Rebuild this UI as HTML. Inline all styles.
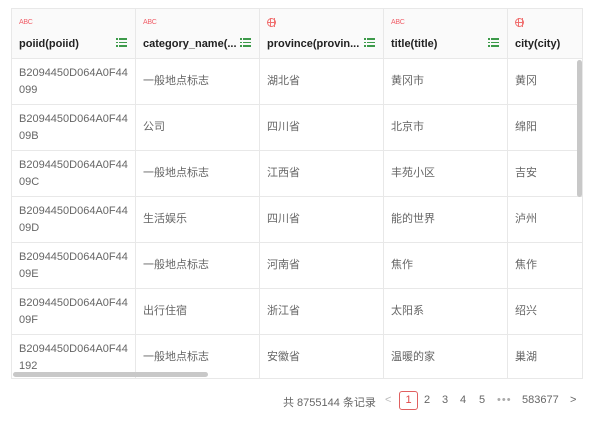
<!DOCTYPE html>
<html><head><meta charset="utf-8"><style>
*{margin:0;padding:0;box-sizing:border-box}
body{width:600px;height:424px;background:#fff;font-family:"Liberation Sans","Noto Sans CJK SC",sans-serif;position:relative;overflow:hidden}
.tbl{position:absolute;left:11px;top:8px;width:572px;height:371px;border:1px solid #e8e8e8;overflow:hidden}
.hd{position:absolute;top:0;height:50px;background:#fafafa;border-right:1px solid #e8e8e8;border-bottom:1px solid #e8e8e8}
.abc{position:absolute;left:7px;top:10px;font-size:7px;color:#f0606a;letter-spacing:-0.3px}
.glb{position:absolute;left:7px;top:9px;width:9px;height:9px;border:1px solid #f07070;border-radius:50%}
.glb:before{content:"";position:absolute;left:2px;top:-1px;width:3px;height:9px;border-left:1px solid #f07070;border-right:1px solid #f07070}
.glb:after{content:"";position:absolute;left:-1px;top:3px;width:9px;height:1px;background:#f07070}
.tt{position:absolute;left:7px;top:29px;font-size:11px;font-weight:bold;color:#222;white-space:nowrap}
.ic{position:absolute;right:8px;top:29px;width:11px;height:9px}
.ic i{display:block;height:1.5px;margin-bottom:2px;background:#3d9a4a;margin-left:3px;position:relative}
.ic i:before{content:"";position:absolute;left:-3px;width:1.5px;height:1.5px;background:#3d9a4a}
.c{position:absolute;height:46px;border-right:1px solid #e8e8e8;border-bottom:1px solid #e8e8e8;font-size:11px;color:#666;padding-left:7px;display:flex;align-items:center;line-height:17px}
.pg{position:absolute;top:394px;font-size:11px;color:#666}
</style></head><body>
<div class="tbl">
<div class="hd" style="left:0;width:124px"><span class="abc">ABC</span><span class="tt">poiid(poiid)</span><span class="ic"><i></i><i></i><i></i></span></div>
<div class="hd" style="left:124px;width:124px"><span class="abc">ABC</span><span class="tt">category_name(...</span><span class="ic"><i></i><i></i><i></i></span></div>
<div class="hd" style="left:248px;width:124px"><span class="glb"></span><span class="tt">province(provin...</span><span class="ic"><i></i><i></i><i></i></span></div>
<div class="hd" style="left:372px;width:124px"><span class="abc">ABC</span><span class="tt">title(title)</span><span class="ic"><i></i><i></i><i></i></span></div>
<div class="hd" style="left:496px;width:80px;border-right:none"><span class="glb"></span><span class="tt">city(city)</span></div>
<div id="rows"></div>
<div style="position:absolute;left:565px;top:51px;width:5px;height:137px;background:#c8c8c8;border-radius:3px"></div>
<div style="position:absolute;left:1px;top:363px;width:195px;height:5px;background:#c8c8c8;border-radius:3px"></div>
</div>
<span class="pg" style="left:283px">共 8755144 条记录</span>
<span class="pg" style="left:385px;color:#bbb">&lt;</span>
<span style="position:absolute;left:399px;top:391px;width:19px;height:19px;border:1px solid #e06060;border-radius:3px;color:#e04848;font-size:11px;text-align:center;line-height:17px">1</span>
<span class="pg" style="left:424px">2</span>
<span class="pg" style="left:442px">3</span>
<span class="pg" style="left:460px">4</span>
<span class="pg" style="left:479px">5</span>
<span class="pg" style="left:497px;color:#aaa;letter-spacing:1px">•••</span>
<span class="pg" style="left:522px">583677</span>
<span class="pg" style="left:570px">&gt;</span>
<script>
var d=[["B2094450D064A0F44<br>099","一般地点标志","湖北省","黄冈市","黄冈"],["B2094450D064A0F44<br>09B","公司","四川省","北京市","绵阳"],["B2094450D064A0F44<br>09C","一般地点标志","江西省","丰苑小区","吉安"],["B2094450D064A0F44<br>09D","生活娱乐","四川省","能的世界","泸州"],["B2094450D064A0F44<br>09E","一般地点标志","河南省","焦作","焦作"],["B2094450D064A0F44<br>09F","出行住宿","浙江省","太阳系","绍兴"],["B2094450D064A0F44<br>192","一般地点标志","安徽省","温暖的家","巢湖"]];
var L=[0,124,248,372,496],W=[124,124,124,124,80],h="";
d.forEach(function(r,i){r.forEach(function(t,j){h+='<div class="c" style="left:'+L[j]+'px;width:'+W[j]+'px;top:'+(50+i*46)+'px'+(j==4?';border-right:none':'')+'">'+t+'</div>'})});
document.getElementById("rows").outerHTML=h;
</script>
</body></html>
